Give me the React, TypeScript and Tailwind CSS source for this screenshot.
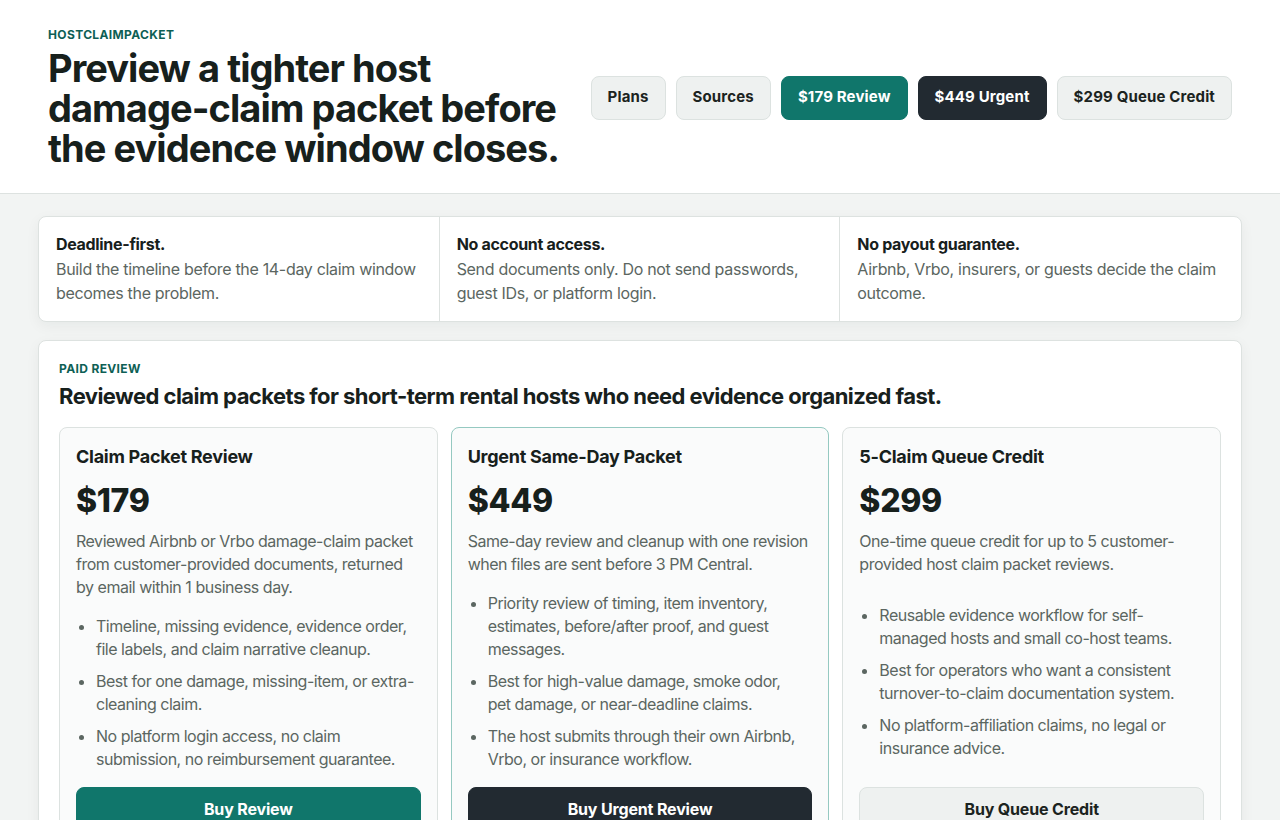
import React from "react";

const font = { fontFamily: "Inter, 'Noto Sans', 'Liberation Sans', sans-serif" };

type Plan = {
  title: string;
  price: string;
  desc: string;
  bullets: string[];
  cta: string;
  variant: "teal" | "dark" | "light";
  featured?: boolean;
};

const plans: Plan[] = [
  {
    title: "Claim Packet Review",
    price: "$179",
    desc: "Reviewed Airbnb or Vrbo damage-claim packet from customer-provided documents, returned by email within 1 business day.",
    bullets: [
      "Timeline, missing evidence, evidence order, file labels, and claim narrative cleanup.",
      "Best for one damage, missing-item, or extra-cleaning claim.",
      "No platform login access, no claim submission, no reimbursement guarantee.",
    ],
    cta: "Buy Review",
    variant: "teal",
  },
  {
    title: "Urgent Same-Day Packet",
    price: "$449",
    desc: "Same-day review and cleanup with one revision when files are sent before 3 PM Central.",
    bullets: [
      "Priority review of timing, item inventory, estimates, before/after proof, and guest messages.",
      "Best for high-value damage, smoke odor, pet damage, or near-deadline claims.",
      "The host submits through their own Airbnb, Vrbo, or insurance workflow.",
    ],
    cta: "Buy Urgent Review",
    variant: "dark",
    featured: true,
  },
  {
    title: "5-Claim Queue Credit",
    price: "$299",
    desc: "One-time queue credit for up to 5 customer-provided host claim packet reviews.",
    bullets: [
      "Reusable evidence workflow for self-managed hosts and small co-host teams.",
      "Best for operators who want a consistent turnover-to-claim documentation system.",
      "No platform-affiliation claims, no legal or insurance advice.",
    ],
    cta: "Buy Queue Credit",
    variant: "light",
  },
];

const notes = [
  {
    title: "Deadline-first.",
    text: "Build the timeline before the 14-day claim window becomes the problem.",
  },
  {
    title: "No account access.",
    text: "Send documents only. Do not send passwords, guest IDs, or platform login.",
  },
  {
    title: "No payout guarantee.",
    text: "Airbnb, Vrbo, insurers, or guests decide the claim outcome.",
  },
];

function NavButton({ label, variant }: { label: string; variant: "light" | "teal" | "dark" }) {
  const cls =
    variant === "teal"
      ? "bg-[#10766b] border-[#10766b] text-white"
      : variant === "dark"
      ? "bg-[#222a31] border-[#222a31] text-white"
      : "bg-[#eef1f0] border-[#dce2e0] text-[#1b2320]";
  return (
    <a
      className={`flex h-[44px] shrink-0 items-center whitespace-nowrap rounded-lg border px-4 text-[15px] font-bold tracking-[0.01em] ${cls}`}
    >
      {label}
    </a>
  );
}

function PlanCard({ plan }: { plan: Plan }) {
  const btn =
    plan.variant === "teal"
      ? "bg-[#10766b] border-[#10766b] text-white"
      : plan.variant === "dark"
      ? "bg-[#222a31] border-[#222a31] text-white"
      : "bg-[#eef1f0] border-[#dce2e0] text-[#1b2320]";
  return (
    <div
      className={`flex flex-col justify-between gap-4 rounded-lg border bg-[#fafbfb] px-4 pt-[17px] pb-5 ${
        plan.featured ? "border-[#95c9c1]" : "border-[#dce2e0]"
      }`}
    >
      <div>
        <h3 className="text-[18px] font-bold leading-6 tracking-[-0.015em] text-[#17201c]">{plan.title}</h3>
        <div className="mt-[13px] text-[32px] font-extrabold leading-[38px] tracking-[-0.01em] text-[#17201c]">
          {plan.price}
        </div>
        <p className="mt-[10px] text-[16px] leading-[23px] tracking-[-0.03em] text-[#5b6661]">{plan.desc}</p>
      </div>
      <ul className="flex list-disc flex-col gap-[9px] pl-5 pr-[5px] text-[16px] leading-[23px] tracking-[-0.03em] text-[#5b6661] marker:text-[#5b6661]">
        {plan.bullets.map((b) => (
          <li key={b}>{b}</li>
        ))}
      </ul>
      <button className={`h-[44px] w-full rounded-lg border text-[16px] font-bold tracking-[-0.01em] ${btn}`}>
        {plan.cta}
      </button>
    </div>
  );
}

export default function App() {
  return (
    <div className="min-h-screen bg-[#f2f4f3]" style={font}>
      <header className="flex items-center justify-between gap-4 border-b border-[#dde2e0] bg-white px-12 pt-[27px] pb-[25px]">
        <div className="min-w-0">
          <div className="text-[12px] font-bold uppercase leading-4 tracking-[0.03em] text-[#0e5f55]">
            HostClaimPacket
          </div>
          <h1 className="mt-[5px] max-w-[530px] text-[38px] font-bold leading-[40px] tracking-[-0.025em] text-[#17201c]">
            Preview a tighter host damage-claim packet before the evidence window closes.
          </h1>
        </div>
        <nav className="flex shrink-0 items-center gap-[10px]">
          <NavButton label="Plans" variant="light" />
          <NavButton label="Sources" variant="light" />
          <NavButton label="$179 Review" variant="teal" />
          <NavButton label="$449 Urgent" variant="dark" />
          <NavButton label="$299 Queue Credit" variant="light" />
        </nav>
      </header>

      <main className="flex flex-col gap-[18px] px-[38px] pt-[22px] pb-10">
        <section className="grid grid-cols-3 divide-x divide-[#dde2e0] rounded-lg border border-[#dde2e0] bg-white shadow-[0_4px_14px_rgba(20,40,30,0.05)]">
          {notes.map((n) => (
            <div key={n.title} className="px-[17px] pt-[15px] pb-4">
              <div className="mb-[1px] text-[16px] font-bold leading-6 tracking-[-0.02em] text-[#17201c]">{n.title}</div>
              <p className="text-[16px] leading-6 tracking-[-0.02em] text-[#5b6661]">{n.text}</p>
            </div>
          ))}
        </section>

        <section className="rounded-lg border border-[#dde2e0] bg-white p-5 shadow-[0_4px_14px_rgba(20,40,30,0.05)]">
          <div className="text-[12px] font-bold uppercase leading-4 tracking-[0.03em] text-[#0e5f55]">Paid review</div>
          <h2 className="mt-[5px] text-[22px] font-bold leading-7 tracking-[-0.025em] text-[#17201c]">
            Reviewed claim packets for short-term rental hosts who need evidence organized fast.
          </h2>
          <div className="mt-[17px] grid grid-cols-3 gap-[13px]">
            {plans.map((p) => (
              <PlanCard key={p.title} plan={p} />
            ))}
          </div>
        </section>
      </main>
    </div>
  );
}
